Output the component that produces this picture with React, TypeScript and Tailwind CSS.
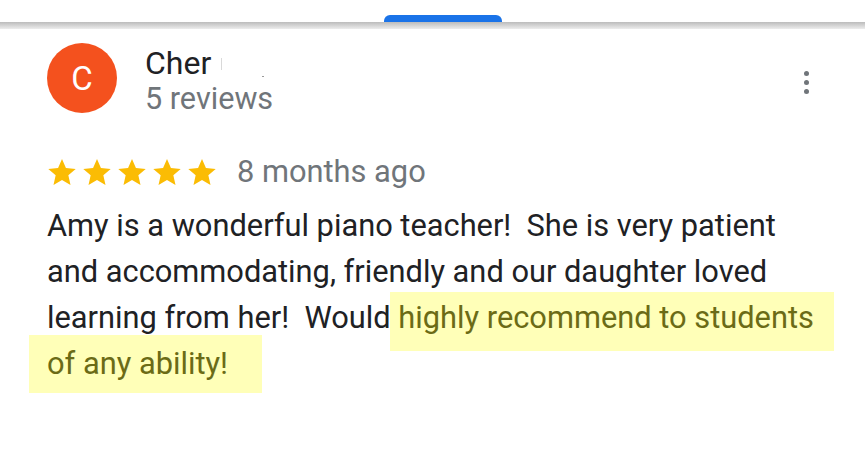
import React from "react";

const Star = () => (
  <svg width="28" height="26" viewBox="1.2 1.6 21.6 20.5" className="shrink-0">
    <path
      fill="#fbbc04"
      d="M12 1.6l3.1 7.1 7.7.7-5.8 5.1 1.7 7.6L12 18.1l-6.7 4 1.7-7.6-5.8-5.1 7.7-.7z"
    />
  </svg>
);

export default function App() {
  return (
    <div className="w-[865px] h-[451px] bg-white overflow-hidden font-['Roboto',sans-serif]">
      {/* top tab strip */}
      <div className="h-[15px]" />
      <div className="pl-[384px] h-[7px]">
        <div className="w-[118px] h-[7px] bg-[#1a73e8] rounded-t-[6px]" />
      </div>
      <div className="h-[7px] bg-gradient-to-b from-[#bcbcbc] to-[#ededed]" />

      {/* header */}
      <div className="flex items-start pl-[47px] pr-[56px] pt-[14px]">
        <div className="w-[70px] h-[70px] rounded-full bg-[#f4511e] flex items-center justify-center text-white text-[33px] leading-none shrink-0">
          C
        </div>
        <div className="ml-[28px] flex flex-col">
          <div className="mt-[3px] text-[32px] leading-[34px] text-[#202124] flex items-center">
            Cher
            <span className="inline-block w-[1px] h-[12px] bg-[#d9d9d9] ml-[10px] mt-[2px]" />
            <span className="inline-block w-[2px] h-[1px] bg-[#9a9a9a] ml-[40px] mt-[26px]" />
          </div>
          <div className="mt-[3px] text-[30.6px] leading-[32px] text-[#70757a]">5 reviews</div>
        </div>
        <div className="ml-auto mt-[28px] flex flex-col gap-[4px] items-center">
          <span className="w-[5px] h-[5px] rounded-full bg-[#70757a]" />
          <span className="w-[5px] h-[5px] rounded-full bg-[#70757a]" />
          <span className="w-[5px] h-[5px] rounded-full bg-[#70757a]" />
        </div>
      </div>

      {/* rating row */}
      <div className="flex items-center pl-[48px] mt-[40px] h-[34px]">
        <div className="flex gap-[7px]">
          <Star />
          <Star />
          <Star />
          <Star />
          <Star />
        </div>
        <span className="ml-[21px] text-[30.8px] leading-[34px] text-[#70757a]">8 months ago</span>
      </div>

      {/* review text */}
      <div className="pl-[47px] mt-[14px] text-[30.8px] leading-[46px] text-[#202124] whitespace-pre">
        <div>Amy is a wonderful piano teacher!  She is very patient</div>
        <div>and accommodating, friendly and our daughter loved</div>
        <div>
          learning from her!  Would
          <span className="relative inline-block">
            <span className="absolute left-[-1px] right-[-20px] top-[-3px] h-[59px] bg-[#ffffb8]" />
            <span className="relative text-[#6b6b16]"> highly recommend to students</span>
          </span>
        </div>
        <div>
          <span className="relative inline-block">
            <span className="absolute left-[-18px] right-[-34px] top-[-6px] h-[58px] bg-[#ffffb8]" />
            <span className="relative text-[#6b6b16]">of any ability!</span>
          </span>
        </div>
      </div>
    </div>
  );
}
